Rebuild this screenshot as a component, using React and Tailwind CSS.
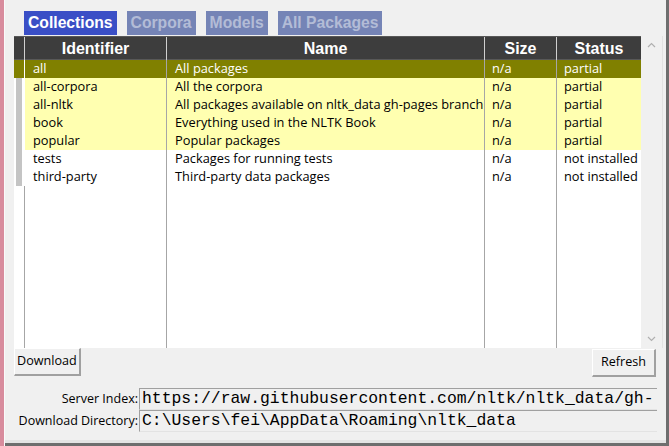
import React from 'react';

const rows = [
  { id: 'all', name: 'All packages', size: 'n/a', status: 'partial', kind: 'sel' },
  { id: 'all-corpora', name: 'All the corpora', size: 'n/a', status: 'partial', kind: 'partial' },
  { id: 'all-nltk', name: 'All packages available on nltk_data gh-pages branch', size: 'n/a', status: 'partial', kind: 'partial' },
  { id: 'book', name: 'Everything used in the NLTK Book', size: 'n/a', status: 'partial', kind: 'partial' },
  { id: 'popular', name: 'Popular packages', size: 'n/a', status: 'partial', kind: 'partial' },
  { id: 'tests', name: 'Packages for running tests', size: 'n/a', status: 'not installed', kind: 'none' },
  { id: 'third-party', name: 'Third-party data packages', size: 'n/a', status: 'not installed', kind: 'none' },
];

const cols = 'grid grid-cols-[10px_142px_318px_72px_85px]';
const ui = { fontFamily: '"Open Sans", "Noto Sans", sans-serif' };

function Tab({ label, active }) {
  return (
    <div
      className={
        'h-[24px] px-[4px] flex items-center text-[15.7px] font-bold leading-none ' +
        (active ? 'bg-[#3a4fc6] text-white' : 'bg-[#7584b6] text-[#b3bcd6]')
      }
      style={{ fontFamily: '"Liberation Sans", Arial, sans-serif' }}
    >
      {label}
    </div>
  );
}

function Row({ r }) {
  const bg = r.kind === 'sel' ? 'bg-[#808000] text-white' : r.kind === 'partial' ? 'bg-[#ffffb0] text-black' : 'bg-white text-black';
  const cell = 'h-[18px] flex items-center whitespace-nowrap overflow-hidden border-l border-[#a6a6a6]';
  return (
    <div className={cols + ' text-[12.8px] ' + bg} style={ui}>
      <div className={r.kind === 'sel' ? 'h-[18px]' : 'h-[18px] bg-[#c4c4c4] border-x-[2px] border-white'} />
      <div className={cell + ' pl-[8px] border-white'}>{r.id}</div>
      <div className={cell + ' pl-[8px]'}>{r.name}</div>
      <div className={cell + ' pl-[7px]'}>{r.size}</div>
      <div className={cell + ' pl-[7px]'}>{r.status}</div>
    </div>
  );
}

function Field({ label, value }) {
  return (
    <div className="flex items-center h-[22px]">
      <div className="w-[125px] shrink-0 pr-[1px] text-right text-[12.5px] text-black whitespace-nowrap" style={ui}>{label}</div>
      <div
        className="flex-1 min-w-0 h-[22px] flex items-center pl-[2px] border-t border-l border-[#a0a0a0] border-b border-b-[#e3e3e3] bg-[#f0f0f0] text-[16.4px] text-black whitespace-nowrap overflow-hidden"
        style={{ fontFamily: '"Liberation Mono", "Courier New", monospace' }}
      >
        {value}
      </div>
    </div>
  );
}

export default function App() {
  return (
    <div className="w-[669px] h-[446px] bg-[#f0f0f0] flex overflow-hidden">
      <div className="w-[4px] shrink-0 bg-[#d88c9d]" />
      <div className="w-[1px] shrink-0 bg-[#fafafa]" />
      <div className="flex-1 min-w-0 flex flex-col">
        <div className="flex-1 flex flex-col pl-[9px] pr-[3px]">
          <div className="flex gap-[10px] pl-[10px] pt-[11px]">
            <Tab label="Collections" active />
            <Tab label="Corpora" />
            <Tab label="Models" />
            <Tab label="All Packages" />
          </div>
          <div className="flex mt-[1px]">
            <div className="w-[627px] shrink-0 h-[312px] flex flex-col bg-white">
              <div
                className={cols + ' h-[24px] bg-[#3d3d3d] text-white text-[16px] font-bold border-y border-[#585858]'}
                style={{ fontFamily: '"Liberation Sans", Arial, sans-serif' }}
              >
                <div />
                <div className="flex items-center justify-center border-l border-[#d0d0d0]">Identifier</div>
                <div className="flex items-center justify-center border-l border-[#d0d0d0]">Name</div>
                <div className="flex items-center justify-center border-l border-[#d0d0d0]">Size</div>
                <div className="flex items-center justify-center border-l border-[#d0d0d0]">Status</div>
              </div>
              {rows.map((r) => (
                <Row key={r.id} r={r} />
              ))}
              <div className={cols + ' flex-1'}>
                <div />
                <div className="border-l border-[#a6a6a6]" />
                <div className="border-l border-[#a6a6a6]" />
                <div className="border-l border-[#a6a6a6]" />
                <div className="border-l border-[#a6a6a6]" />
              </div>
            </div>
            <div className="w-[22px] shrink-0 h-[312px] flex flex-col items-center justify-between py-[4px] border-r border-[#e2e2e2]">
              <svg width="9" height="6" viewBox="0 0 9 6" className="mt-[2px]">
                <path d="M1 5 L4.5 1.5 L8 5" fill="none" stroke="#b0b0b0" strokeWidth="1.2" />
              </svg>
              <svg width="9" height="6" viewBox="0 0 9 6" className="mb-[2px]">
                <path d="M1 1 L4.5 4.5 L8 1" fill="none" stroke="#b0b0b0" strokeWidth="1.2" />
              </svg>
            </div>
          </div>
          <div className="flex justify-between items-start pr-[7px]">
            <button
              className="h-[28px] px-[2px] text-[12.6px] text-black bg-[#f0f0f0] border-t border-l border-white border-r-2 border-b-2 border-r-[#a0a0a0] border-b-[#a0a0a0]"
              style={ui}
            >
              Download
            </button>
            <button
              className="h-[28px] mt-[1px] px-[8px] text-[12.6px] text-black bg-[#f0f0f0] border-t border-l border-white border-r-2 border-b-2 border-r-[#a0a0a0] border-b-[#a0a0a0]"
              style={ui}
            >
              Refresh
            </button>
          </div>
          <div className="flex flex-col pt-[11px] pr-[6px]">
            <Field label="Server Index:" value="https://raw.githubusercontent.com/nltk/nltk_data/gh-" />
            <Field label="Download Directory:" value="C:\Users\fei\AppData\Roaming\nltk_data" />
          </div>
        </div>
        <div className="h-[3px] bg-[#e4e4e4]" />
        <div className="h-[3px] bg-[#6e6e6e]" />
      </div>
      <div className="w-[3px] shrink-0 bg-[#6e6e6e]" />
    </div>
  );
}
